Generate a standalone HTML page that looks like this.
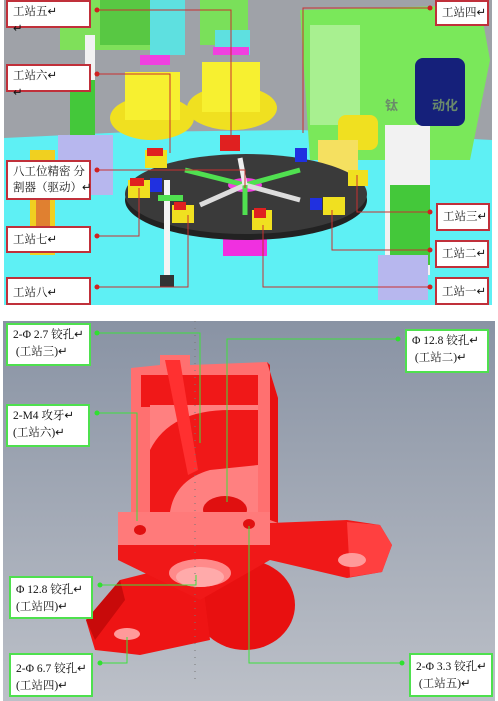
<!DOCTYPE html>
<html><head><meta charset="utf-8"><style>
body{margin:0;width:498px;height:701px;background:#fff;overflow:hidden;position:relative;font-family:"Liberation Serif","Noto Serif CJK SC",serif}
svg{position:absolute;left:0;top:0}
.l{position:absolute;background:#fff;font-size:11.5px;line-height:17px;padding:2px 5px;box-sizing:border-box;color:#111;white-space:nowrap}
.r{border:2px solid #c0303a}
.g{border:2px solid #4ee04e}
</style></head><body>
<svg width="498" height="701" viewBox="0 0 498 701">
<!-- top scene -->
<rect x="4" y="0" width="488" height="305" fill="#9fa2a8"/>
<polygon points="4,138 130,132 300,130 492,140 492,305 4,305" fill="#5ef0f4"/>
<!-- left green machine -->
<rect x="60" y="0" width="110" height="50" fill="#7fe05a"/>
<rect x="100" y="0" width="60" height="45" fill="#58c843"/>
<rect x="85" y="35" width="10" height="120" fill="#f2f2f2"/>
<rect x="70" y="80" width="25" height="60" fill="#44c83a"/>
<rect x="58" y="135" width="55" height="60" fill="#b7b7ee"/>
<rect x="150" y="0" width="35" height="55" fill="#5ee0e0"/>
<rect x="200" y="0" width="48" height="45" fill="#7ae05a"/>
<rect x="215" y="30" width="35" height="25" fill="#5ee0e0"/>
<rect x="140" y="55" width="30" height="10" fill="#f040e0"/>
<rect x="213" y="47" width="36" height="8" fill="#f040e0"/>
<!-- yellow gearboxes -->
<ellipse cx="152" cy="118" rx="42" ry="22" fill="#f0e020"/>
<rect x="125" y="72" width="55" height="48" fill="#f7f030"/>
<ellipse cx="232" cy="108" rx="45" ry="22" fill="#f0e020"/>
<rect x="202" y="62" width="58" height="50" fill="#f7f030"/>
<rect x="30" y="150" width="25" height="105" fill="#f0d020"/>
<rect x="36" y="180" width="14" height="70" fill="#e08030"/>
<!-- right green machine -->
<polygon points="300,10 480,5 490,60 470,160 310,160" fill="#7ae85a"/>
<rect x="310" y="25" width="50" height="100" fill="#a8f090"/>
<rect x="385" y="125" width="45" height="150" fill="#f2f2f2"/>
<rect x="390" y="185" width="40" height="80" fill="#44c83a"/>
<rect x="378" y="255" width="50" height="45" fill="#b7b7ee"/>
<rect x="415" y="58" width="50" height="68" rx="8" fill="#15207a"/>
<rect x="338" y="115" width="40" height="35" rx="8" fill="#f0e020"/>
<rect x="318" y="140" width="40" height="40" fill="#f5e060"/>
<text x="385" y="110" font-size="13" fill="#6a8a6a" font-family="Noto Sans CJK SC" font-weight="bold">钛</text>
<text x="432" y="110" font-size="13" fill="#6a8a6a" font-family="Noto Sans CJK SC" font-weight="bold">动化</text>
<!-- table -->
<rect x="223" y="232" width="44" height="24" fill="#f030e0"/>
<ellipse cx="246" cy="200" rx="121" ry="40" fill="#222"/>
<ellipse cx="246" cy="194" rx="121" ry="40" fill="#3a3a3a"/>
<ellipse cx="245" cy="185" rx="17" ry="7" fill="#f040e0"/>
<g stroke-width="5">
<line x1="245" y1="185" x2="185" y2="170" stroke="#50e050"/>
<line x1="245" y1="185" x2="300" y2="170" stroke="#50e050"/>
<line x1="245" y1="185" x2="200" y2="205" stroke="#ddd"/>
<line x1="245" y1="185" x2="300" y2="200" stroke="#ddd"/>
<line x1="245" y1="185" x2="245" y2="215" stroke="#50e050"/>
<line x1="245" y1="185" x2="240" y2="158" stroke="#eee"/>
</g>
<rect x="145" y="150" width="22" height="18" fill="#f0e020"/><rect x="147" y="148" width="16" height="8" fill="#e02020"/>
<rect x="128" y="180" width="22" height="18" fill="#f0e020"/><rect x="130" y="178" width="14" height="8" fill="#e02020"/>
<rect x="172" y="205" width="22" height="18" fill="#f0e020"/><rect x="174" y="202" width="12" height="8" fill="#e02020"/>
<rect x="252" y="210" width="20" height="20" fill="#f0e020"/><rect x="254" y="208" width="12" height="10" fill="#e02020"/>
<rect x="323" y="197" width="22" height="18" fill="#f0e020"/>
<rect x="348" y="170" width="20" height="16" fill="#f0e020"/>
<rect x="220" y="135" width="20" height="16" fill="#e02020"/>
<rect x="150" y="178" width="12" height="14" fill="#2030e0"/>
<rect x="295" y="148" width="12" height="14" fill="#2030e0"/>
<rect x="310" y="198" width="12" height="12" fill="#2030e0"/>
<rect x="164" y="180" width="6" height="100" fill="#f4f4f4"/>
<rect x="160" y="275" width="14" height="12" fill="#333"/>
<rect x="158" y="195" width="25" height="6" fill="#50e050"/>
<!-- red lines -->
<g stroke="#c83030" stroke-width="1" fill="none">
<polyline points="97,10 231,10 231,140"/><polyline points="97,74 170,74 170,153"/>
<polyline points="97,170 245,170 245,188"/><polyline points="97,236 139,236 139,188"/>
<polyline points="97,287 188,287 188,215"/><polyline points="430,8 303,8 303,133"/>
<polyline points="430,212 357,212 357,175"/><polyline points="430,250 332,250 332,210"/>
<polyline points="430,287 263,287 263,225"/>
</g>
<g fill="#d02020"><circle cx="97" cy="10" r="2.5"/><circle cx="97" cy="74" r="2.5"/><circle cx="97" cy="170" r="2.5"/><circle cx="97" cy="236" r="2.5"/><circle cx="97" cy="287" r="2.5"/><circle cx="430" cy="8" r="2.5"/><circle cx="430" cy="212" r="2.5"/><circle cx="430" cy="250" r="2.5"/><circle cx="430" cy="287" r="2.5"/></g>
<!-- bottom scene -->
<defs><linearGradient id="bg" x1="0" y1="0" x2="0" y2="1"><stop offset="0" stop-color="#8993a4"/><stop offset="1" stop-color="#bcc0c8"/></linearGradient></defs>
<rect x="3" y="321" width="492" height="380" fill="url(#bg)"/>
<!-- lower lobes -->
<ellipse cx="245" cy="605" rx="50" ry="45" fill="#e81010"/>
<polygon points="120,580 200,560 210,640 140,655 95,650 86,620" fill="#ee1414"/>
<polygon points="86,620 120,580 125,600 95,640" fill="#c80a0a"/>
<ellipse cx="127" cy="634" rx="13" ry="6" fill="#ff9a9a"/>
<!-- arm -->
<polygon points="118,545 270,523 347,520 380,525 392,545 382,572 347,578 270,560 200,600 118,560" fill="#f01818"/>
<polygon points="347,522 380,525 392,545 382,572 350,577" fill="#ff4040"/>
<ellipse cx="352" cy="560" rx="14" ry="7" fill="#ff9a9a"/>
<!-- box -->
<polygon points="131,368 160,365 160,355 190,355 190,365 267,362 278,398 278,523 131,517" fill="#ff7070"/>
<polygon points="267,362 278,398 278,523 270,520 270,365" fill="#e81010"/>
<rect x="141" y="375" width="117" height="32" fill="#f01818"/>
<polygon points="150,405 258,405 258,512 150,512" fill="#ff8080"/>
<path d="M150 450 Q170 410 230 410 L258 410 L258 465 L210 470 Q175 480 170 512 L150 512Z" fill="#f01818"/>
<polygon points="165,360 180,360 198,470 188,475" fill="#ff3030"/>
<ellipse cx="225" cy="510" rx="22" ry="14" fill="#e01010"/>
<rect x="118" y="512" width="152" height="33" fill="#ff7a7a"/>
<ellipse cx="140" cy="530" rx="6" ry="5" fill="#e01010"/>
<ellipse cx="249" cy="524" rx="6" ry="5" fill="#e01010"/>
<ellipse cx="200" cy="573" rx="31" ry="14" fill="#ff8a8a"/>
<ellipse cx="200" cy="577" rx="24" ry="10" fill="#ffaaaa"/>
<!-- dashed center -->
<line x1="195" y1="321" x2="195" y2="680" stroke="#777" stroke-dasharray="1 6" stroke-width="1"/>
<!-- green lines -->
<g stroke="#3ee03e" stroke-width="1" fill="none">
<polyline points="97,333 200,333 200,443"/><polyline points="398,339 227,339 227,502"/>
<polyline points="97,413 137,413 137,521"/><polyline points="100,585 196,585 196,575"/>
<polyline points="100,663 127,663 127,637"/><polyline points="402,663 249,663 249,526"/>
</g>
<g fill="#30e030"><circle cx="97" cy="333" r="2.5"/><circle cx="398" cy="339" r="2.5"/><circle cx="97" cy="413" r="2.5"/><circle cx="100" cy="585" r="2.5"/><circle cx="100" cy="663" r="2.5"/><circle cx="402" cy="663" r="2.5"/></g>
</svg>
<div class="l r" style="left:6px;top:0;width:85px;height:28px">工站五↵<br>↵</div>
<div class="l r" style="left:6px;top:64px;width:85px;height:28px">工站六↵<br>↵</div>
<div class="l r" style="left:6px;top:160px;width:85px;height:40px;line-height:16px">八工位精密 分<br>割器（驱动）↵</div>
<div class="l r" style="left:6px;top:226px;width:85px;height:27px;padding-top:4px">工站七↵</div>
<div class="l r" style="left:6px;top:277px;width:85px;height:28px;padding-top:6px">工站八↵</div>
<div class="l r" style="left:435px;top:0;width:54px;height:26px;padding-top:3px">工站四↵</div>
<div class="l r" style="left:436px;top:203px;width:54px;height:28px;padding-top:4px">工站三↵</div>
<div class="l r" style="left:435px;top:240px;width:54px;height:28px;padding-top:4px">工站二↵</div>
<div class="l r" style="left:435px;top:277px;width:54px;height:28px;padding-top:5px">工站一↵</div>
<div class="l g" style="left:6px;top:323px;width:85px;height:43px">2-Φ 2.7 铰孔↵<br>&nbsp;(工站三)↵</div>
<div class="l g" style="left:405px;top:329px;width:84px;height:44px">Φ 12.8 铰孔↵<br>&nbsp;(工站二)↵</div>
<div class="l g" style="left:6px;top:404px;width:84px;height:43px">2-M4 攻牙↵<br>(工站六)↵</div>
<div class="l g" style="left:9px;top:576px;width:84px;height:43px;padding-top:4px">Φ 12.8 铰孔↵<br>(工站四)↵</div>
<div class="l g" style="left:9px;top:653px;width:84px;height:44px;padding-top:6px">2-Φ 6.7 铰孔↵<br>(工站四)↵</div>
<div class="l g" style="left:409px;top:653px;width:84px;height:44px;padding-top:4px">2-Φ 3.3 铰孔↵<br>&nbsp;(工站五)↵</div>
</body></html>
